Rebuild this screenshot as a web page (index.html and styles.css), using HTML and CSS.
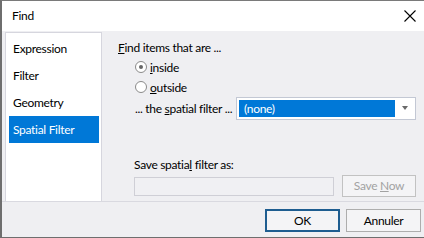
FILE: index.html
```html
<!DOCTYPE html>
<html>
<head>
<meta charset="utf-8">
<link rel="stylesheet" href="styles.css">
</head>
<body>
<div class="window">
  <div class="titlebar">
    <span class="title">Find</span>
    <svg class="close" width="12" height="12" viewBox="0 0 12 12"><path d="M0.5 0.5 L11.5 11.5 M11.5 0.5 L0.5 11.5" stroke="#000" stroke-width="1.1" fill="none"/></svg>
  </div>
  <div class="main">
    <div class="nav">
      <div class="nav-item">Expression</div>
      <div class="nav-item">Filter</div>
      <div class="nav-item">Geometry</div>
      <div class="nav-item selected">Spatial Filter</div>
    </div>
    <div class="content">
      <div class="heading"><u>F</u>ind items that are ...</div>
      <div class="radio-row"><span class="radio checked"></span><span><u>i</u>nside</span></div>
      <div class="radio-row"><span class="radio"></span><span><u>o</u>utside</span></div>
      <div class="filter-row">
        <span class="filter-label">... the <u>s</u>patial filter ...</span>
        <div class="select">
          <div class="select-value">(none)</div>
          <div class="select-arrow"><span class="tri"></span></div>
        </div>
      </div>
      <div class="save-label">Save spatia<u>l</u> filter as:</div>
      <div class="save-row">
        <div class="save-input"></div>
        <div class="btn disabled"><span>Save <u>N</u>ow</span></div>
      </div>
    </div>
  </div>
  <div class="footer">
    <div class="btn default"><span>OK</span></div>
    <div class="btn"><span>Annuler</span></div>
  </div>
</div>
</body>
</html>
```
FILE: styles.css
```css
html, body {
  margin: 0;
  padding: 0;
  background: #efeff2;
}
.window {
  width: 424px;
  height: 238px;
  box-sizing: border-box;
  border-top: 1px solid #7a7a7a;
  border-left: 2px solid #6e6e6e;
  border-bottom: 1px solid #6e6e6e;
  display: flex;
  flex-direction: column;
  font-family: "Lato", sans-serif;
  font-size: 12px;
  letter-spacing: -0.3px;
  color: #000;
  background: #efeff2;
}
.titlebar {
  height: 30px;
  flex: none;
  background: #fff;
  display: flex;
  align-items: center;
  justify-content: space-between;
  padding: 0 8px 0 10px;
}
.title {
  line-height: 16px;
}
.close {
  display: block;
}
.main {
  height: 170px;
  flex: none;
  display: flex;
  border-bottom: 1px solid #d9d9e0;
}
.nav {
  width: 90px;
  flex: none;
  margin-left: 3px;
  margin-top: 1px;
  border: 1px solid #d6d6de;
  border-bottom: none;
  background: #fff;
  padding: 2px 2px 0 3px;
  display: flex;
  flex-direction: column;
}
.nav-item {
  height: 27px;
  line-height: 27px;
  padding-left: 4px;
  white-space: nowrap;
}
.nav-item.selected {
  background: #0078d7;
  color: #fff;
}
.content {
  flex: 1;
  padding-left: 16px;
  padding-top: 9px;
  display: flex;
  flex-direction: column;
}
.heading {
  height: 16px;
  line-height: 16px;
  white-space: nowrap;
}
.radio-row {
  height: 20px;
  display: flex;
  align-items: center;
  gap: 3px;
  margin-left: 17px;
}
.heading + .radio-row {
  margin-top: 1px;
}
.radio {
  width: 10px;
  height: 10px;
  border: 1px solid #8a8a8a;
  border-radius: 50%;
  background: #fff;
  position: relative;
}
.radio.checked::after {
  content: "";
  position: absolute;
  left: 3px;
  top: 3px;
  width: 4px;
  height: 4px;
  border-radius: 50%;
  background: #666;
}
.filter-row {
  height: 22px;
  display: flex;
  align-items: center;
  margin-left: 17px;
}
.filter-label {
  width: 101px;
  flex: none;
  white-space: nowrap;
}
.select {
  width: 176px;
  height: 19px;
  border: 1px solid #c3c8d4;
  background: #fff;
  padding: 1px;
  display: flex;
}
.select-value {
  flex: 1;
  background: #0078d7;
  color: #fff;
  line-height: 17px;
  height: 17px;
  padding-left: 5px;
  margin: 1px 0 1px 1px;
}
.select-arrow {
  width: 19px;
  display: flex;
  align-items: center;
  justify-content: center;
}
.tri {
  width: 0;
  height: 0;
  border-left: 3.5px solid transparent;
  border-right: 3.5px solid transparent;
  border-top: 4px solid #6a6a6a;
}
.save-label {
  margin-top: 38px;
  margin-left: 16px;
  height: 16px;
  line-height: 16px;
  white-space: nowrap;
}
.save-row {
  margin-top: 2px;
  margin-left: 16px;
  display: flex;
  align-items: center;
  gap: 8px;
}
.save-input {
  width: 198px;
  height: 17px;
  border: 1px solid #cfcfd6;
  background: #f0f0f3;
}
.btn {
  width: 72px;
  height: 20px;
  border: 1px solid #adadad;
  background: #f4f4f6;
  display: flex;
  align-items: center;
  justify-content: center;
  line-height: 16px;
  white-space: nowrap;
}
.btn.disabled {
  color: #a2a2a2;
  border-color: #c2c2c2;
}
.footer {
  flex: 1;
  display: flex;
  justify-content: flex-end;
  align-items: flex-start;
  gap: 6px;
  padding: 7px 3px 0 0;
}
.footer .btn {
  width: 73px;
  height: 21px;
}
.btn.default {
  border: 1px solid #1e5d90;
  box-shadow: inset 0 0 0 1px #1e5d90;
}
```
